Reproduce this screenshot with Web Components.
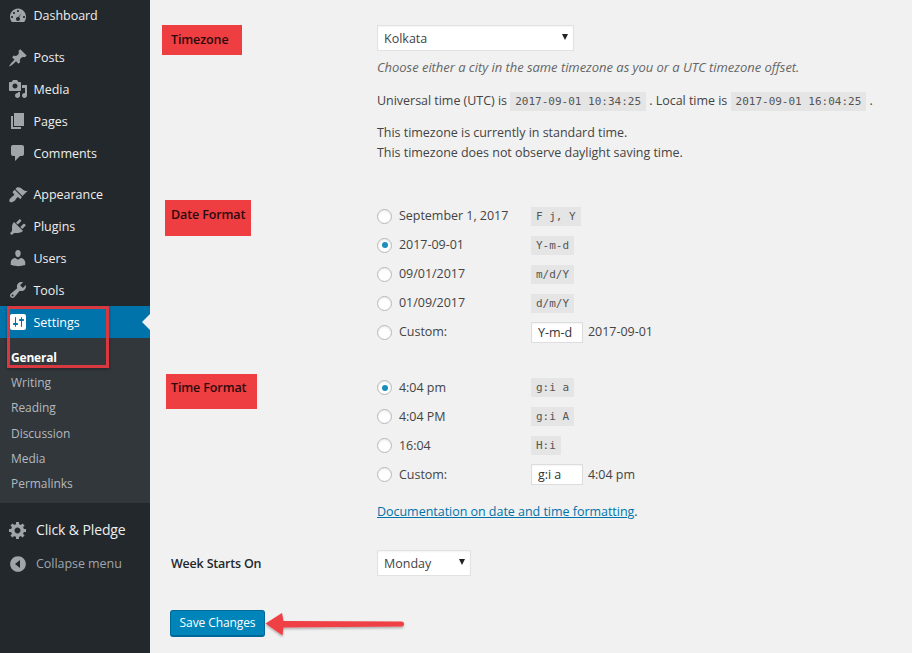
<!DOCTYPE html>
<html lang="en"><head><meta charset="utf-8"><title>General Settings</title>
<style>
html,body{margin:0;padding:0;height:653px;overflow:hidden;background:#f1f1f1;font-family:"Open Sans","Noto Sans",sans-serif;font-size:13px;color:#444}
</style></head><body>
<wp-page>
  <wp-sidebar slot="side">
    <wp-menu-item icon="dashboard">Dashboard</wp-menu-item>
    <wp-gap></wp-gap>
    <wp-menu-item icon="post">Posts</wp-menu-item>
    <wp-menu-item icon="media">Media</wp-menu-item>
    <wp-menu-item icon="page">Pages</wp-menu-item>
    <wp-menu-item icon="comment">Comments</wp-menu-item>
    <wp-gap></wp-gap>
    <wp-menu-item icon="brush">Appearance</wp-menu-item>
    <wp-menu-item icon="plugin">Plugins</wp-menu-item>
    <wp-menu-item icon="users">Users</wp-menu-item>
    <wp-menu-item icon="tools">Tools</wp-menu-item>
    <wp-menu-item icon="settings" current>Settings</wp-menu-item>
    <wp-submenu>
      <wp-sub-item current>General</wp-sub-item>
      <wp-sub-item>Writing</wp-sub-item>
      <wp-sub-item>Reading</wp-sub-item>
      <wp-sub-item>Discussion</wp-sub-item>
      <wp-sub-item>Media</wp-sub-item>
      <wp-sub-item>Permalinks</wp-sub-item>
    </wp-submenu>
    <wp-plugin-item icon="gear">Click &amp; Pledge</wp-plugin-item>
    <wp-plugin-item icon="collapse" muted>Collapse menu</wp-plugin-item>
  </wp-sidebar>

  <wp-section style="padding-top:25px">
    <wp-tag slot="label" style="margin:0 0 0 12px;width:80px;height:30px;padding:6px 0 0 9px">Timezone</wp-tag>
    <wp-select style="width:197px">Kolkata</wp-select>
    <wp-line style="margin-top:5px"><i style="color:#666;font-size:13px;letter-spacing:-.04px">Choose either a city in the same timezone as you or a UTC timezone offset.</i></wp-line>
    <wp-line style="margin-top:13px">Universal time (UTC) is <wp-code>2017-09-01 10:34:25</wp-code> . Local time is <wp-code>2017-09-01 16:04:25</wp-code> .</wp-line>
    <wp-line style="margin-top:11.500px">This timezone is currently in standard time.</wp-line>
    <wp-line>This timezone does not observe daylight saving time.</wp-line>
  </wp-section>

  <wp-section style="padding-top:37.500px">
    <wp-tag slot="label" style="margin:0 0 0 15px;width:86px;height:36px;padding:6px 0 0 6px">Date Format</wp-tag>
    <wp-radio style="margin-top:1.500px" label="September 1, 2017"><wp-code>F j, Y</wp-code></wp-radio>
    <wp-radio checked label="2017-09-01"><wp-code>Y-m-d</wp-code></wp-radio>
    <wp-radio label="09/01/2017"><wp-code>m/d/Y</wp-code></wp-radio>
    <wp-radio label="01/09/2017"><wp-code>d/m/Y</wp-code></wp-radio>
    <wp-radio label="Custom:"><wp-input value="Y-m-d"></wp-input>2017-09-01</wp-radio>
  </wp-section>

  <wp-section style="padding-top:26.500px">
    <wp-tag slot="label" style="margin:1px 0 0 16px;width:91px;height:35px;padding:5px 0 0 5px">Time Format</wp-tag>
    <wp-radio checked label="4:04 pm"><wp-code>g:i a</wp-code></wp-radio>
    <wp-radio label="4:04 PM"><wp-code>g:i A</wp-code></wp-radio>
    <wp-radio label="16:04"><wp-code>H:i</wp-code></wp-radio>
    <wp-radio label="Custom:"><wp-input value="g:i a"></wp-input>4:04 pm</wp-radio>
    <wp-line style="margin-top:13px"><wp-link>Documentation on date and time formatting</wp-link>.</wp-line>
  </wp-section>

  <wp-section style="padding-top:27.500px">
    <wp-plain-label slot="label">Week Starts On</wp-plain-label>
    <wp-select style="width:94px">Monday</wp-select>
  </wp-section>

  <wp-save>Save Changes</wp-save>

  <wp-annotations slot="over"></wp-annotations>
</wp-page>

<script>
const ICONS={
 dashboard:'M3.76 16h12.48c1.1-1.43 1.76-3.21 1.76-5.14 0-4.62-3.58-8.36-8-8.36S2 6.24 2 10.86c0 1.93.66 3.71 1.76 5.14zM10 4c.55 0 1 .45 1 1s-.45 1-1 1-1-.45-1-1 .45-1 1-1zM6 6c.55 0 1 .45 1 1s-.45 1-1 1-1-.45-1-1 .45-1 1-1zm7.5 1.200l-2.400 4.100c.5.4.9 1 .9 1.700 0 1.100-.9 2-2 2s-2-.9-2-2 .9-2 2-2c.1 0 .2 0 .3 0zM4 10c.55 0 1 .45 1 1s-.45 1-1 1-1-.45-1-1 .45-1 1-1zm12 0c.55 0 1 .45 1 1s-.45 1-1 1-1-.45-1-1 .45-1 1-1z',
 post:'M10.44 3.02l1.82-1.82 6.36 6.35-1.83 1.82c-1.05-.68-2.48-.57-3.41.36l-.75.75c-.92.93-1.04 2.35-.35 3.41l-1.83 1.82-2.41-2.41-2.8 2.79c-.42.42-3.38 2.71-3.8 2.29s1.86-3.39 2.28-3.81l2.79-2.79L4.1 9.36l1.83-1.82c1.05.69 2.48.57 3.4-.36l.75-.75c.93-.92 1.05-2.35.36-3.41z',
 media:'M13 11V4c0-.55-.45-1-1-1h-1.67L9 1H5L3.67 3H2c-.55 0-1 .45-1 1v7c0 .55.45 1 1 1h10c.55 0 1-.45 1-1zM7 4.5c1.38 0 2.5 1.12 2.5 2.5S8.38 9.5 7 9.5 4.5 8.38 4.5 7 5.62 4.5 7 4.5zM14 6h5v10.5c0 1.38-1.12 2.5-2.5 2.5S14 17.88 14 16.5s1.12-2.5 2.5-2.5c.17 0 .34.02.5.05V9h-3V6zm-4 8.05V13h2v3.5c0 1.38-1.12 2.5-2.5 2.5S7 17.88 7 16.5 8.12 14 9.5 14c.17 0 .34.02.5.05z',
 page:'M6 15V2h10v13H6zm-1 1h8v2H3V5h2v11z',
 comment:'M5 2h9c1.1 0 2 .9 2 2v7c0 1.1-.9 2-2 2h-2l-5 5v-5H5c-1.1 0-2-.9-2-2V4c0-1.1.9-2 2-2z',
 brush:'M14.48 11.06L7.41 3.99l1.5-1.5c.5-.56 2.3-.47 3.51.32 1.21.8 1.43 1.28 2.91 2.1 1.18.64 2.45 1.26 4.45.85zm-.71.71L6.7 4.7 4.93 6.47c-.39.39-.39 1.02 0 1.41l1.06 1.06c.39.39.39 1.03 0 1.42-.6.6-1.43 1.11-2.21 1.69-.35.26-.7.53-1.01.84C1.43 13.71.98 15.47 1.5 16.5c.17.32.31.46.54.54 1.03.52 2.79.07 4.62-1.26.31-.31.58-.66.84-1.01.58-.78 1.09-1.61 1.69-2.21.39-.39 1.03-.39 1.42 0l1.06 1.06c.39.39 1.02.39 1.41 0z',
 plugin:'M13.11 4.36L9.87 7.6 8 5.73l3.24-3.24c.35-.34 1.05-.2 1.56.32.52.51.66 1.21.31 1.55zm-8 1.77l.91-1.12 9.01 9.01-1.19.84c-.71.71-2.63 1.16-3.82 1.16H6.14L4.9 17.26c-.59.59-1.54.59-2.12 0-.59-.58-.59-1.53 0-2.12l1.24-1.24v-3.88c0-1.13.4-3.05 1.09-3.89zm7.26 3.97l3.24-3.24c.34-.35 1.04-.21 1.55.31.52.51.66 1.21.31 1.55l-3.24 3.25z',
 users:'M10 9.25c-2.27 0-2.73-3.44-2.73-3.44C7 4.02 7.82 2 9.97 2c2.16 0 2.98 2.02 2.71 3.81 0 0-.41 3.44-2.68 3.44zm0 2.57L12.72 10c2.39 0 4.52 2.33 4.52 4.53v2.49s-3.65 1.13-7.24 1.13c-3.65 0-7.24-1.13-7.24-1.13v-2.49c0-2.25 1.94-4.48 4.47-4.48z',
 tools:'M16.68 9.77c-1.34 1.34-3.3 1.67-4.95.99l-5.41 6.52c-.99.99-2.59.99-3.58 0s-.99-2.59 0-3.57l6.52-5.42c-.68-1.65-.35-3.61.99-4.95 1.28-1.28 3.12-1.62 4.72-1.06l-2.89 2.89 2.82 2.82 2.86-2.87c.53 1.58.18 3.4-1.08 4.65zM3.81 16.21c.4.39 1.04.39 1.43 0 .4-.4.4-1.04 0-1.43-.39-.4-1.03-.4-1.43 0-.39.39-.39 1.03 0 1.43z',
 settings:'M18 16V4c0-1.1-.9-2-2-2H4c-1.1 0-2 .9-2 2v12c0 1.1.9 2 2 2h12c1.1 0 2-.9 2-2zM8 11h1c.55 0 1 .45 1 1s-.45 1-1 1H8v1.5c0 .28-.22.5-.5.5s-.5-.22-.5-.5V13H6c-.55 0-1-.45-1-1s.45-1 1-1h1V5.500c0-.28.22-.5.5-.5s.5.22.5.5V11zm5-2h-1c-.55 0-1-.45-1-1s.45-1 1-1h1V5.500c0-.28.22-.5.5-.5s.5.22.5.5V7h1c.55 0 1 .45 1 1s-.45 1-1 1h-1v5.500c0 .28-.22.5-.5.5s-.5-.22-.5-.5V9z',
 gear:'M18 12h-2.18c-.17.7-.44 1.35-.81 1.93l1.54 1.54-2.1 2.1-1.54-1.54c-.58.36-1.23.64-1.91.81V19H8v-2.18c-.68-.17-1.33-.44-1.91-.81l-1.54 1.54-2.12-2.12 1.54-1.54c-.36-.58-.64-1.23-.81-1.91H1V9.03h2.17c.17-.7.44-1.35.81-1.93L2.44 5.56l2.12-2.12L6.1 4.98c.58-.36 1.23-.64 1.93-.81V2h3v2.18c.68.17 1.33.44 1.91.81l1.54-1.54 2.12 2.12-1.54 1.54c.36.58.64 1.23.81 1.91H18V12zm-8.500 1.500c1.66 0 3-1.34 3-3s-1.34-3-3-3-3 1.34-3 3 1.34 3 3 3z',
 collapse:'M10 2.160c4.330 0 7.840 3.510 7.840 7.840S14.330 17.840 10 17.840 2.160 14.330 2.160 10 5.670 2.160 10 2.160zM12 14V6l-5 4z'
};
function svgIcon(n,c){return `<svg viewBox="0 0 20 20" width="20" height="20" aria-hidden="true"><path fill="${c}" fill-rule="evenodd" d="${ICONS[n]}"/></svg>`}
function def(name,css,html){
  customElements.define(name,class extends HTMLElement{
    constructor(){super();this.attachShadow({mode:'open'})}
    connectedCallback(){this.shadowRoot.innerHTML=`<style>${css}</style>`+(typeof html==='function'?html(this):html)}
  });
}
const SANS='"Open Sans","Noto Sans",sans-serif';
def('wp-page',`:host{display:grid;grid-template-columns:150px 1fr;width:912px;height:653px;position:relative;overflow:hidden}
 main{display:flex;flex-direction:column;min-width:0}`,
 `<slot name="side"></slot><main><slot></slot></main><slot name="over"></slot>`);
def('wp-sidebar',`:host{display:flex;flex-direction:column;background:#23282d;height:653px;width:150px}`,`<slot></slot>`);
def('wp-gap',`:host{display:block;height:10px}`,``);
def('wp-menu-item',`:host{display:flex;align-items:center;height:31.800px;color:#eee;font:12.500px/18px ${SANS};letter-spacing:-.03px;padding-left:7.500px;position:relative;flex:none}
 :host([current]){background:#0073aa;color:#fff}
 svg{margin-right:6px;flex:none}
 span.t{display:block;margin-top:1px}
 .n{position:absolute;right:0;top:50%;margin-top:-8px;border:8px solid transparent;border-right-color:#f1f1f1;border-left:0}
`,el=>{const c=el.hasAttribute('current');return svgIcon(el.getAttribute('icon'),c?'#fff':'#a0a5aa')+`<span class="t"><slot></slot></span>`+(c?'<span class="n"></span>':'')});
def('wp-submenu',`:host{display:flex;flex-direction:column;background:#32373c;padding:7.500px 0 6px;flex:none}`,`<slot></slot>`);
def('wp-sub-item',`:host{display:flex;align-items:center;height:25.200px;padding-left:11px;color:#b4b9be;font:12px/18px ${SANS};letter-spacing:-.03px}
 :host([current]){color:#fff;font-weight:700;letter-spacing:-.2px}`,`<slot></slot>`);
def('wp-plugin-item',`:host{display:flex;align-items:center;height:34px;padding-left:8px;color:#eee;font:14px/18px ${SANS};letter-spacing:-.12px}
 :host([muted]){color:#a0a5aa;font-size:12.500px;letter-spacing:-.05px}
 :host(:first-of-type){margin-top:10px}
 svg{margin-right:8px;flex:none}`,el=>svgIcon(el.getAttribute('icon'),'#a0a5aa')+`<slot></slot>`);
def('wp-section',`:host{display:grid;grid-template-columns:227px 1fr;align-items:start;flex:none}
 .c{display:flex;flex-direction:column;min-width:0}`,`<slot name="label"></slot><div class="c"><slot></slot></div>`);
def('wp-tag',`:host{display:block;box-sizing:border-box;background:#ef3e42;color:#2b0a0c;font:600 12.500px/18px ${SANS};letter-spacing:-.12px}`,`<slot></slot>`);
def('wp-plain-label',`:host{display:block;margin:5.500px 0 0 21px;color:#23282d;font:600 12.500px/18px ${SANS};letter-spacing:-.2px}`,`<slot></slot>`);
def('wp-select',`:host{display:flex;align-items:center;justify-content:space-between;box-sizing:border-box;height:26px;margin-bottom:1px;padding:2px 5px 0 6px;background:#fff;border:1px solid #e2e2e2;box-shadow:inset 0 1px 2px rgba(0,0,0,.05);font:12.500px/18px ${SANS};color:#444}
 i{display:block;width:0;height:0;border:3.500px solid transparent;border-top:6px solid #222;border-bottom:0;margin-top:-4px}`,`<slot></slot><i></i>`);
def('wp-line',`:host{display:block;white-space:nowrap;font:12.500px/20px ${SANS};letter-spacing:-.03px;color:#444}`,`<slot></slot>`);
def('wp-code',`:host{display:inline-block;background:#e5e5e5;color:#555;font:11px/13px "DejaVu Sans Mono","Liberation Mono",monospace;letter-spacing:0;padding:3px 5px;vertical-align:baseline}`,`<slot></slot>`);
def('wp-link',`:host{color:#0073aa;text-decoration:underline}`,`<slot></slot>`);
def('wp-radio',`:host{display:grid;grid-template-columns:154px 1fr;height:29px;align-items:center;font:12.500px/20px ${SANS};letter-spacing:-.03px;color:#444}
 label{display:flex;align-items:center;gap:7px}
 .r{box-sizing:border-box;width:15px;height:15px;border-radius:50%;background:#fff;border:1px solid #b4b9be;box-shadow:inset 0 1px 2px rgba(0,0,0,.1);display:flex;align-items:center;justify-content:center;flex:none}
 .r i{width:6px;height:6px;border-radius:50%;background:#1e8cbe}
 .v{display:flex;align-items:center;gap:5px}`,
 el=>`<label><span class="r">${el.hasAttribute('checked')?'<i></i>':''}</span><span>${el.getAttribute('label')}</span></label><div class="v"><slot></slot></div>`);
def('wp-input',`:host{display:block;box-sizing:border-box;width:52px;height:21px;background:#fff;border:1px solid #ddd;padding:0 0 0 6px;font:12.500px/19px ${SANS};color:#333;box-shadow:inset 0 1px 2px rgba(0,0,0,.05)}`,el=>`<span>${el.getAttribute('value')}</span>`);
def('wp-save',`:host{display:flex;align-items:center;justify-content:center;box-sizing:border-box;margin:33.500px 0 0 20px;width:95px;height:27px;background:#0085ba;border:1px solid #006799;border-bottom-width:2px;border-radius:3px;color:#fff;font:12px/18px ${SANS};letter-spacing:-.1px;flex:none}`,`<slot></slot>`);
def('wp-annotations',`:host{position:absolute;inset:0;pointer-events:none;display:block}
 .box{position:absolute;left:7px;top:306px;width:102px;height:62px;box-sizing:border-box;border:3px solid #d8383f;box-shadow:0 1px 3px rgba(0,0,0,.35)}
 svg{position:absolute;left:255px;top:600px;overflow:visible}`,
 `<div class="box"></div><svg width="160" height="45" viewBox="255 600 160 45"><defs><filter id="s" x="-10%" y="-30%" width="120%" height="180%"><feDropShadow dx="0" dy="1.500" stdDeviation="1.200" flood-color="#000" flood-opacity=".3"/></filter></defs><path filter="url(#s)" fill="#ef4045" d="M265.500 623.500L282 613l1.500 8 118 .6c1.700 0 2.500 1.100 2.500 2.400s-.8 2.400-2.500 2.400l-118 1-1 8z"/></svg>`);
</script>
</body></html>
